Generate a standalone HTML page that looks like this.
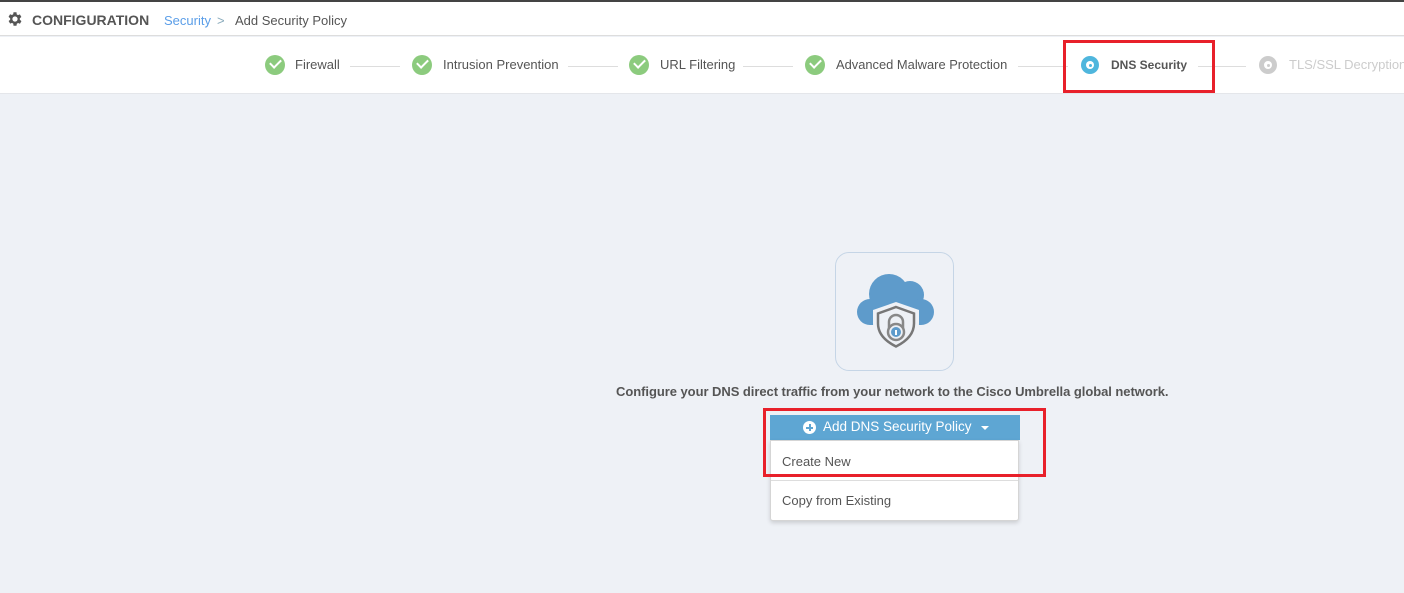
<!DOCTYPE html>
<html><head><meta charset="utf-8"><style>
*{margin:0;padding:0;box-sizing:border-box}
body{width:1404px;height:593px;overflow:hidden;background:#eef1f6;font-family:"Liberation Sans",sans-serif;position:relative;color:#555}
.a{position:absolute;white-space:nowrap}
.chk{position:absolute;width:20px;height:20px;border-radius:50%;background:#8ccb7e}
.chk::after{content:"";position:absolute;left:5px;top:4px;width:9px;height:5px;border-left:2px solid #fff;border-bottom:2px solid #fff;transform:rotate(-45deg)}
.ln{position:absolute;height:1px;background:#ddd;top:66px}
.st{position:absolute;top:57px;font-size:13px;color:#555;white-space:nowrap}
</style></head><body>
<div class="a" style="left:0;top:0;width:1404px;height:2px;background:#444"></div>
<div class="a" style="left:0;top:2px;width:1404px;height:34px;background:#fff;border-bottom:1px solid #ddd"></div>
<div class="a" style="left:0;top:37px;width:1404px;height:57px;background:#fff;border-bottom:1px solid #e4e6ea"></div>
<svg class="a" style="left:6px;top:10px" width="18" height="18" viewBox="0 0 24 24"><path fill="#555" d="M19.4 13a7.5 7.5 0 0 0 0-2l2.1-1.6-2-3.5-2.5 1a7 7 0 0 0-1.7-1L15 3h-4l-.4 2.7a7 7 0 0 0-1.7 1l-2.5-1-2 3.5L6.6 11a7.5 7.5 0 0 0 0 2l-2.1 1.6 2 3.5 2.5-1a7 7 0 0 0 1.7 1L11 21h4l.4-2.7a7 7 0 0 0 1.7-1l2.5 1 2-3.5zM13 15.5a3.5 3.5 0 1 1 0-7 3.5 3.5 0 0 1 0 7z" transform="translate(-1 0)"/></svg>
<div class="a" style="left:32px;top:12px;font-size:14px;font-weight:bold;color:#555">CONFIGURATION</div>
<div class="a" style="left:164px;top:13px;font-size:13px;color:#5b9ee8">Security</div>
<div class="a" style="left:217px;top:13px;font-size:13px;color:#8ab">&gt;</div>
<div class="a" style="left:235px;top:13px;font-size:13px;color:#555">Add Security Policy</div>

<div class="chk" style="left:265px;top:55px"></div><div class="st" style="left:295px">Firewall</div>
<div class="ln" style="left:350px;width:50px"></div>
<div class="chk" style="left:412px;top:55px"></div><div class="st" style="left:443px">Intrusion Prevention</div>
<div class="ln" style="left:568px;width:50px"></div>
<div class="chk" style="left:629px;top:55px"></div><div class="st" style="left:660px">URL Filtering</div>
<div class="ln" style="left:743px;width:50px"></div>
<div class="chk" style="left:805px;top:55px"></div><div class="st" style="left:836px;font-size:12.9px">Advanced Malware Protection</div>
<div class="ln" style="left:1018px;width:50px"></div>
<div class="a" style="left:1081px;top:56px;width:18px;height:18px;border-radius:50%;background:#4fb6dd"><div style="position:absolute;left:5px;top:5px;width:8px;height:8px;border-radius:50%;background:#fff"></div><div style="position:absolute;left:7.5px;top:7.5px;width:3px;height:3px;border-radius:50%;background:#4fb6dd"></div></div>
<div class="st" style="left:1111px;font-weight:bold;color:#555;font-size:12px;top:58px">DNS Security</div>
<div class="ln" style="left:1198px;width:48px"></div>
<div class="a" style="left:1259px;top:56px;width:18px;height:18px;border-radius:50%;background:#ccc"><div style="position:absolute;left:5px;top:5px;width:8px;height:8px;border-radius:50%;background:#fff"></div><div style="position:absolute;left:7.5px;top:7.5px;width:3px;height:3px;border-radius:50%;background:#ccc"></div></div>
<div class="st" style="left:1289px;color:#ccc">TLS/SSL Decryption</div>
<div class="a" style="left:1063px;top:40px;width:152px;height:53px;border:3px solid #e8202a"></div>

<div class="a" style="left:835px;top:252px;width:119px;height:119px;border:1.5px solid #c5d5e6;border-radius:14px;background:#eef1f6"></div>
<svg class="a" style="left:835px;top:252px" width="119" height="119" viewBox="0 0 119 119">
<g fill="#5e9bcb">
<circle cx="35" cy="60" r="13"/>
<circle cx="54" cy="42" r="20"/>
<circle cx="75" cy="43" r="14"/>
<circle cx="86" cy="60" r="13"/>
<rect x="35" y="50" width="51" height="23"/>
</g>
<path fill="#eef1f6" d="M61 50l23 8v13c0 15-10 23-23 30-13-7-23-15-23-30V58z"/>
<path fill="none" stroke="#777" stroke-width="2.5" d="M61 55l18 6.5v10c0 11-8 18-18 23-10-5-18-12-18-23v-10z"/>
<path fill="none" stroke="#888" stroke-width="2.5" d="M54 76v-6a7 7 0 0 1 14 0v6"/>
<circle cx="61" cy="80" r="8" fill="#eef1f6" stroke="#888" stroke-width="2.5"/>
<circle cx="61" cy="80" r="5" fill="#5e9bcb"/>
<rect x="60" y="78" width="2" height="5" fill="#fff"/>
</svg>

<div class="a" style="left:616px;top:384px;font-size:13px;font-weight:bold;color:#555;letter-spacing:-0.05px">Configure your DNS direct traffic from your network to the Cisco Umbrella global network.</div>
<div class="a" style="left:770px;top:415px;width:250px;height:25px;background:#5ea6d3;color:#fff;font-size:13.5px">
<div style="position:absolute;left:33px;top:6px;width:13px;height:13px;border-radius:50%;background:#fff"><div style="position:absolute;left:3px;top:5.5px;width:7px;height:2px;background:#5ea6d3"></div><div style="position:absolute;left:5.5px;top:3px;width:2px;height:7px;background:#5ea6d3"></div></div>
<div style="position:absolute;left:53px;top:4px">Add DNS Security Policy</div>
<div style="position:absolute;left:211px;top:11px;border-left:4px solid transparent;border-right:4px solid transparent;border-top:4px solid #fff"></div>
</div>
<div class="a" style="left:770px;top:440px;width:249px;height:81px;background:#fff;border:1px solid #d5d5d5;border-radius:0 0 3px 3px;box-shadow:0 2px 4px rgba(0,0,0,.15)">
<div style="position:absolute;left:0;top:39px;width:100%;height:1px;background:#ddd"></div>
<div style="position:absolute;left:11px;top:13px;font-size:13px;color:#555">Create New</div>
<div style="position:absolute;left:11px;top:52px;font-size:13px;color:#555">Copy from Existing</div>
</div>
<div class="a" style="left:763px;top:408px;width:283px;height:69px;border:3px solid #e8202a"></div>
</body></html>
